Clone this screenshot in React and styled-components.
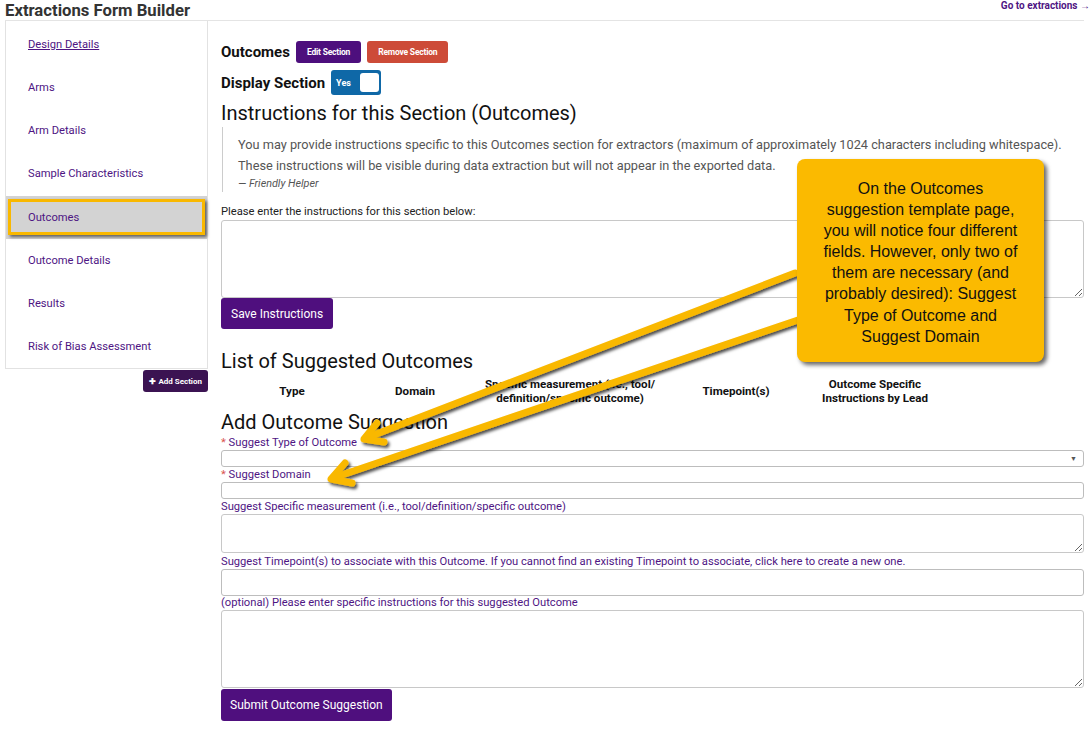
import React from 'react';
import styled, { createGlobalStyle } from 'styled-components';

const GlobalStyle = createGlobalStyle`
  body {
    margin: 0;
    background: #fff;
    font-family: Roboto, "Liberation Sans", Arial, sans-serif;
    color: #222;
    overflow: hidden;
  }
  * { box-sizing: border-box; }
`;

const PURPLE = '#4e1583';
const YELLOW = '#f9b800';

const Page = styled.div`
  position: relative;
  width: 1091px;
  min-height: 729px;
  padding: 0 7px 0 5px;
`;

const Header = styled.div`
  display: flex;
  justify-content: space-between;
  align-items: flex-start;
  height: 21px;
  border-bottom: 1px solid #e4e4e4;
`;

const Title = styled.h1`
  margin: 0;
  font-size: 16.7px;
  line-height: 21px;
  font-weight: 700;
  color: #333;
`;

const TopLink = styled.a`
  margin-right: -6px;
  font-size: 10px;
  line-height: 12px;
  font-weight: 700;
  color: ${PURPLE};
  text-decoration: none;
  white-space: nowrap;
`;

const Body = styled.div`
  display: flex;
  align-items: flex-start;
  gap: 13px;
`;

const SideColumn = styled.div`
  width: 203px;
  flex: none;
  display: flex;
  flex-direction: column;
  align-items: flex-end;
`;

const Sidebar = styled.nav`
  width: 100%;
  border: 1px solid #e2e2e2;
  border-top: none;
  padding: 2px 0 0;
`;

const SideItem = styled.div`
  position: relative;
  height: 43.15px;
  display: flex;
  align-items: center;
  padding-left: 22px;
  font-size: 11.2px;
  color: ${PURPLE};
  text-decoration: ${(p) => (p.$underline ? 'underline' : 'none')};
  background: ${(p) => (p.$active ? '#d3d3d3' : 'transparent')};

  &::after {
    content: '';
    display: ${(p) => (p.$active ? 'block' : 'none')};
    position: absolute;
    left: 2px;
    right: 2px;
    top: 3px;
    bottom: 4px;
    border: 3px solid ${YELLOW};
    box-shadow: 2px 2px 3px rgba(0, 0, 0, 0.55);
  }
`;

const AddSection = styled.button`
  margin-top: 1px;
  height: 22px;
  padding: 0 6px;
  border: none;
  border-radius: 3px;
  background: #3b1352;
  color: #fff;
  font-family: inherit;
  font-size: 8px;
  font-weight: 700;
`;

const Main = styled.main`
  flex: 1;
  padding-top: 20px;
  display: flex;
  flex-direction: column;
`;

const Row = styled.div`
  display: flex;
  align-items: center;
  gap: ${(p) => p.$gap || 6}px;
  margin-top: ${(p) => p.$top || 0}px;
`;

const Strong = styled.span`
  font-size: 15px;
  font-weight: 700;
  color: #111;
`;

const SmallButton = styled.button`
  height: 22px;
  padding: 0 11px;
  border: none;
  border-radius: 3px;
  background: ${(p) => p.$bg};
  color: #fff;
  font-family: inherit;
  font-size: 8.5px;
  font-weight: 700;
  letter-spacing: -0.2px;
`;

const Toggle = styled.div`
  width: 50px;
  height: 25px;
  border-radius: 3px;
  background: #0f68a7;
  display: flex;
  align-items: center;
  justify-content: space-between;
  padding: 0 2px 0 5px;
  color: #fff;
  font-size: 9px;
  font-weight: 700;
`;

const Knob = styled.span`
  width: 19px;
  height: 19px;
  border-radius: 3px;
  background: #fff;
`;

const Heading = styled.h2`
  margin: ${(p) => p.$top || 0}px 0 0;
  font-size: 20px;
  line-height: 24px;
  font-weight: 400;
  color: #111;
`;

const Quote = styled.blockquote`
  margin: 2px 0 0 1px;
  padding: 7px 0 2px 15px;
  border-left: 1px solid #ccc;
  color: #555;
`;

const QuoteText = styled.p`
  margin: 0;
  font-size: 12.75px;
  line-height: 21px;
`;

const QuoteCite = styled.footer`
  margin-top: 1px;
  font-size: 10.8px;
  line-height: 13px;
  font-style: italic;
  color: #555;
`;

const Label = styled.label`
  display: block;
  margin-top: ${(p) => p.$top ?? 2}px;
  font-size: 11.2px;
  line-height: 12px;
  white-space: nowrap;
  color: ${(p) => (p.$plain ? '#222' : PURPLE)};
`;

const Star = styled.span`
  color: #d9534f;
`;

const TextArea = styled.textarea`
  display: block;
  width: 100%;
  height: ${(p) => p.$h}px;
  margin-top: ${(p) => p.$top ?? 1}px;
  border: 1px solid #c8c8c8;
  border-radius: 3px;
  resize: vertical;
  font-family: inherit;
`;

const Input = styled.input`
  display: block;
  width: 100%;
  height: ${(p) => p.$h || 17}px;
  margin-top: 1px;
  border: 1px solid #bdbdbd;
  border-radius: 3px;
`;

const Select = styled.div`
  height: 17px;
  margin-top: 1px;
  border: 1px solid #bdbdbd;
  border-radius: 3px;
  display: flex;
  align-items: center;
  justify-content: flex-end;
  padding-right: 6px;
  font-size: 7px;
  color: #555;
`;

const PrimaryButton = styled.button`
  align-self: flex-start;
  height: ${(p) => p.$h || 32}px;
  margin-top: ${(p) => p.$top || 0}px;
  padding: 0 ${(p) => p.$pad || 12}px;
  border: none;
  border-radius: 3px;
  background: #4f0f7e;
  color: #fff;
  font-family: inherit;
  font-size: 12px;
`;

const TableHead = styled.div`
  display: grid;
  grid-template-columns: 142px 104px 206px 126px 152px;
  align-items: center;
  margin-top: 4px;
  height: 28px;
`;

const Th = styled.div`
  text-align: center;
  font-size: 11.6px;
  line-height: 14px;
  font-weight: 700;
  color: #111;
`;

const Callout = styled.div`
  position: absolute;
  left: 797px;
  top: 159px;
  width: 247px;
  height: 203px;
  padding: 19px 8px 0;
  border-radius: 8px;
  background: #fbba00;
  box-shadow: 3px 3px 4px rgba(0, 0, 0, 0.6);
  font-family: "Liberation Sans", Arial, sans-serif;
  font-size: 16px;
  line-height: 21.1px;
  text-align: center;
  color: #111;
`;

const Overlay = styled.svg`
  position: absolute;
  left: 0;
  top: 0;
  pointer-events: none;
`;

function Arrows() {
  return (
    <Overlay width="1091" height="729" viewBox="0 0 1091 729">
      <defs>
        <filter id="shadow" x="-10%" y="-10%" width="120%" height="130%">
          <feDropShadow dx="2" dy="2.5" stdDeviation="1.5" floodColor="#000" floodOpacity="0.7" />
        </filter>
      </defs>
      <g fill="none" stroke={YELLOW} strokeWidth="7" strokeLinecap="round" strokeLinejoin="round" filter="url(#shadow)">
        <path d="M795 273 L366 438" />
        <path d="M384 442 L364 439 L377 423" />
        <path d="M798 320 L333 478" />
        <path d="M352 483 L331 479 L345 463" />
      </g>
    </Overlay>
  );
}

const sections = [
  'Design Details',
  'Arms',
  'Arm Details',
  'Sample Characteristics',
  'Outcomes',
  'Outcome Details',
  'Results',
  'Risk of Bias Assessment',
];

export default function App() {
  return (
    <Page>
      <GlobalStyle />
      <Header>
        <Title>Extractions Form Builder</Title>
        <TopLink>Go to extractions →</TopLink>
      </Header>
      <Body>
        <SideColumn>
          <Sidebar>
            {sections.map((s, i) => (
              <SideItem key={s} $underline={i === 0} $active={s === 'Outcomes'}>
                {s}
              </SideItem>
            ))}
          </Sidebar>
          <AddSection>✚ Add Section</AddSection>
        </SideColumn>

        <Main>
          <Row>
            <Strong>Outcomes</Strong>
            <SmallButton $bg="#4d0f7d">Edit Section</SmallButton>
            <SmallButton $bg="#cd4b38">Remove Section</SmallButton>
          </Row>
          <Row $top={7} $gap={6}>
            <Strong>Display Section</Strong>
            <Toggle>
              Yes
              <Knob />
            </Toggle>
          </Row>
          <Heading $top={6}>Instructions for this Section (Outcomes)</Heading>
          <Quote>
            <QuoteText>
              You may provide instructions specific to this Outcomes section for extractors (maximum of approximately 1024 characters including whitespace).
            </QuoteText>
            <QuoteText>
              These instructions will be visible during data extraction but will not appear in the exported data.
            </QuoteText>
            <QuoteCite>— Friendly Helper</QuoteCite>
          </Quote>
          <Label $plain $top={14}>Please enter the instructions for this section below:</Label>
          <TextArea $h={78} $top={2} />
          <PrimaryButton $h={31} $pad={10}>Save Instructions</PrimaryButton>

          <Heading $top={20}>List of Suggested Outcomes</Heading>
          <TableHead>
            <Th>Type</Th>
            <Th>Domain</Th>
            <Th>Specific measurement (i.e., tool/<br />definition/specific outcome)</Th>
            <Th>Timepoint(s)</Th>
            <Th>Outcome Specific<br />Instructions by Lead</Th>
          </TableHead>

          <Heading $top={5}>Add Outcome Suggestion</Heading>
          <Label $top={3}><Star>*</Star> Suggest Type of Outcome</Label>
          <Select>▼</Select>
          <Label><Star>*</Star> Suggest Domain</Label>
          <Input />
          <Label>Suggest Specific measurement (i.e., tool/definition/specific outcome)</Label>
          <TextArea $h={39} />
          <Label $top={3}>
            Suggest Timepoint(s) to associate with this Outcome. If you cannot find an existing Timepoint to associate, click here to create a new one.
          </Label>
          <Input $h={27} />
          <Label $top={1}>(optional) Please enter specific instructions for this suggested Outcome</Label>
          <TextArea $h={78} />
          <PrimaryButton $top={1} $pad={9}>Submit Outcome Suggestion</PrimaryButton>
        </Main>
      </Body>

      <Arrows />
      <Callout>
        On the Outcomes<br />
        suggestion template page,<br />
        you will notice four different<br />
        fields. However, only two of<br />
        them are necessary (and<br />
        probably desired): Suggest<br />
        Type of Outcome and<br />
        Suggest Domain
      </Callout>
    </Page>
  );
}
